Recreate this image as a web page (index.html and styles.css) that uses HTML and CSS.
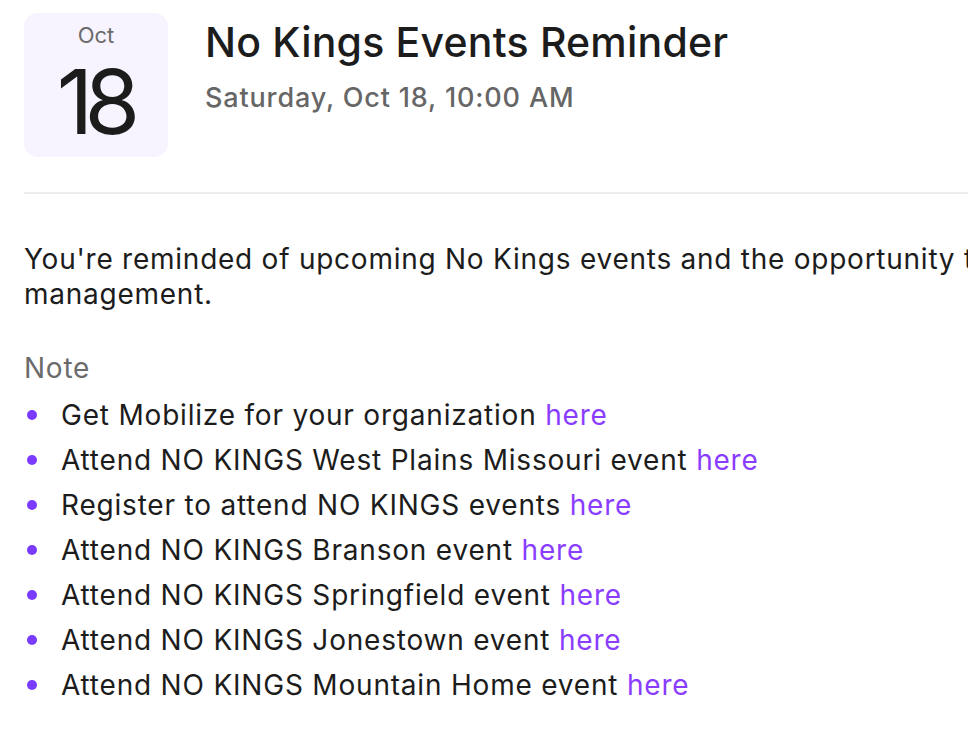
FILE: index.html
```html
<!DOCTYPE html>
<html lang="en">
<head>
<meta charset="utf-8">
<title>No Kings Events Reminder</title>
<link rel="stylesheet" href="styles.css">
</head>
<body>
<div class="page">
  <header class="header">
    <div class="date-badge">
      <div class="month">Oct</div>
      <div class="day">18</div>
    </div>
    <div class="heading">
      <h1 class="title">No Kings Events Reminder</h1>
      <div class="when">Saturday, Oct 18, 10:00 AM</div>
    </div>
  </header>
  <hr class="divider">
  <p class="intro">You're reminded of upcoming No Kings events and the opportunity to use Mobilize for event<br>management.</p>
  <div class="note-label">Note</div>
  <ul class="links">
    <li>Get Mobilize for your organization <a href="#">here</a></li>
    <li>Attend NO KINGS West Plains Missouri event <a href="#">here</a></li>
    <li>Register to attend NO KINGS events <a href="#">here</a></li>
    <li>Attend NO KINGS Branson event <a href="#">here</a></li>
    <li>Attend NO KINGS Springfield event <a href="#">here</a></li>
    <li>Attend NO KINGS Jonestown event <a href="#">here</a></li>
    <li>Attend NO KINGS Mountain Home event <a href="#">here</a></li>
  </ul>
</div>
</body>
</html>
```
FILE: styles.css
```css
html, body {
  margin: 0;
  padding: 0;
  background: #ffffff;
  overflow: hidden;
}
body {
  font-family: Inter, "Noto Sans", sans-serif;
  color: #1c1c1c;
}
.page {
  width: 1600px;
  padding: 13px 0 0 24px;
}
.header {
  display: flex;
  align-items: flex-start;
  gap: 37px;
}
.date-badge {
  width: 144px;
  height: 144px;
  border-radius: 14px;
  background: #f7f4ff;
  display: flex;
  flex-direction: column;
  align-items: center;
  box-sizing: border-box;
  padding-top: 9px;
}
.month {
  font-size: 22px;
  line-height: 26px;
  color: #6b6b6b;
}
.day {
  margin-top: 14px;
  font-size: 90px;
  line-height: 80px;
  letter-spacing: -9px;
  padding-right: 4px;
  color: #1c1c1c;
}
.heading {
  padding-top: 4px;
}
.title {
  margin: 0;
  font-size: 41px;
  line-height: 50px;
  font-weight: 500;
  letter-spacing: 0.2px;
}
.when {
  margin-top: 14px;
  font-size: 27px;
  line-height: 34px;
  color: #666666;
  font-weight: 500;
  letter-spacing: 0.85px;
}
.divider {
  margin: 35px 0 0 0;
  border: 0;
  border-top: 2px solid #ececec;
}
.intro {
  margin: 48px 0 0 0;
  font-size: 28px;
  line-height: 35px;
  letter-spacing: 0.75px;
  white-space: nowrap;
}
.note-label {
  margin-top: 36px;
  font-size: 28px;
  line-height: 40px;
  letter-spacing: 0.75px;
  color: #6b6b6b;
}
.links {
  margin: 5px 0 0 0;
  padding: 0;
  list-style: none;
}
.links li {
  position: relative;
  padding-left: 37px;
  font-size: 28px;
  line-height: 45px;
  letter-spacing: 0.8px;
}
.links li::before {
  content: "";
  position: absolute;
  left: 3px;
  top: 17px;
  width: 10px;
  height: 10px;
  border-radius: 50%;
  background: #7b3bff;
}
.links a {
  color: #8a3dff;
  text-decoration: none;
}
```
